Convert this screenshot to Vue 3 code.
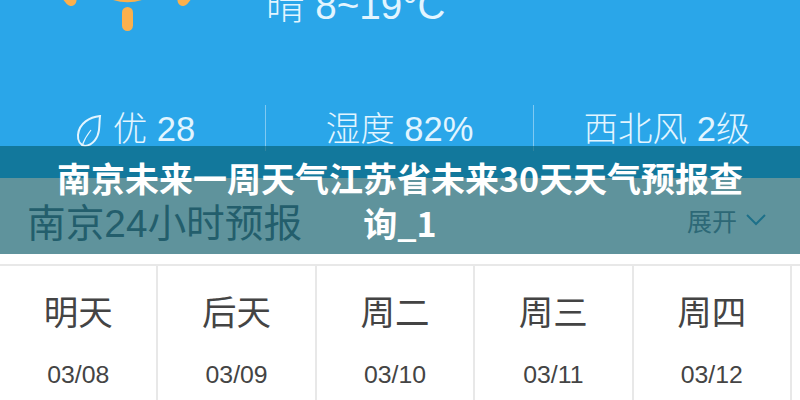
<template>
  <div class="page">
    <section class="hero">
      <div class="today">
        <svg class="sun" width="140" height="32" viewBox="0 0 140 32">
          <path d="M56 0Q70.5 4.5 85 0z" fill="#fbb04c" />
          <rect x="65" y="7" width="11" height="24" rx="5.5" fill="#fbb04c" />
          <path d="M7 -8L14 .5M133 -8L126 .5" stroke="#fbb04c" stroke-width="11" stroke-linecap="round" />
        </svg>
        <div class="temp">晴 8~19°C</div>
      </div>
      <div class="stats">
        <div class="stat first">
          <svg class="leaf" width="26" height="34" viewBox="1 0 26 34" fill="none" stroke="#e2f5ff" stroke-width="2">
            <path d="M25 2C15 3 4 9 3 21c-.5 6 2.500 10 7 11 8-1 13-8 14-16 .5-5 .5-10 1-14z" />
            <path d="M7 32c2-6 5-11 9-16" stroke-width="1.2" />
          </svg>
          <span>优 28</span>
        </div>
        <div class="stat">湿度 82%</div>
        <div class="stat last">西北风 2级</div>
      </div>
    </section>

    <div class="section-head">
      <span class="section-title">南京24小时预报</span>
      <span class="expand">
        展开
        <svg width="20" height="12" viewBox="0 0 20 12" fill="none" stroke="#4a91b5" stroke-width="2">
          <path d="M1 1l9 9 9-9" />
        </svg>
      </span>
    </div>

    <div class="days">
      <div v-for="d in days" :key="d.date" class="day">
        <div class="day-name">{{ d.name }}</div>
        <div class="day-date">{{ d.date }}</div>
      </div>
    </div>

    <div class="overlay">
      <h1>南京未来一周天气江苏省未来30天天气预报查询_1</h1>
    </div>
  </div>
</template>

<script setup>
const days = [
  { name: "明天", date: "03/08" },
  { name: "后天", date: "03/09" },
  { name: "周二", date: "03/10" },
  { name: "周三", date: "03/11" },
  { name: "周四", date: "03/12" },
];
</script>

<style>
html, body { margin: 0; background: #fff; }
</style>

<style scoped>
.page {
  position: relative;
  width: 800px;
  height: 400px;
  overflow: hidden;
  background: #fff;
  font-family: "Liberation Sans", "Noto Sans CJK SC", sans-serif;
}
.hero {
  height: 178px;
  background: #2aa6e9;
  color: #e2f5ff;
}
.today {
  display: flex;
  height: 105px;
  padding-left: 57px;
}
.sun { display: block; flex: none; }
.temp {
  margin: -16px 0 0 69px;
  font-size: 38.6px;
  line-height: 44px;
  height: 28px;
  font-weight: 300;
  white-space: nowrap;
}
.stats {
  display: flex;
  height: 46px;
}
.stat {
  flex: none;
  width: 268px;
  display: flex;
  align-items: center;
  justify-content: center;
  gap: 11px;
  font-size: 34.5px;
  font-weight: 300;
  padding-bottom: 4px;
  box-sizing: border-box;
  white-space: pre;
}
.stat.first { width: 265px; padding-left: 6px; }
.stat.last { width: 267px; }
.stat + .stat { border-left: 1px solid rgba(255, 255, 255, 0.4); }
.leaf { margin-top: 10px; }
.section-head {
  display: flex;
  align-items: center;
  justify-content: space-between;
  height: 76px;
  padding: 8px 34px 0 27px;
  box-sizing: border-box;
  background: #fff1e9;
  color: #5a5f65;
}
.section-title { font-size: 38.7px; }
.expand {
  display: flex;
  align-items: center;
  gap: 9px;
  font-size: 25px;
  color: #747a81;
}
.days {
  display: flex;
  margin-top: 10px;
  border-top: 2px solid #e8e8e8;
  color: #444;
}
.day {
  flex: none;
  width: 158.4px;
  box-sizing: border-box;
  border-right: 2px solid #e8e8e8;
  text-align: center;
  height: 140px;
}
.day-name {
  font-size: 34.5px;
  line-height: 44px;
  margin-top: 25px;
}
.day-date {
  font-size: 24.8px;
  line-height: 30px;
  margin-top: 25px;
}
.overlay {
  position: absolute;
  left: 0;
  top: 146px;
  width: 100%;
  height: 108px;
  background: rgba(5, 94, 112, 0.64);
  display: flex;
  align-items: center;
  justify-content: center;
}
.overlay h1 {
  width: 710px;
  margin: 0;
  font-family: "Noto Sans CJK SC", sans-serif;
  font-size: 34px;
  line-height: 45px;
  font-weight: 700;
  color: #fff;
  text-align: center;
}
</style>
